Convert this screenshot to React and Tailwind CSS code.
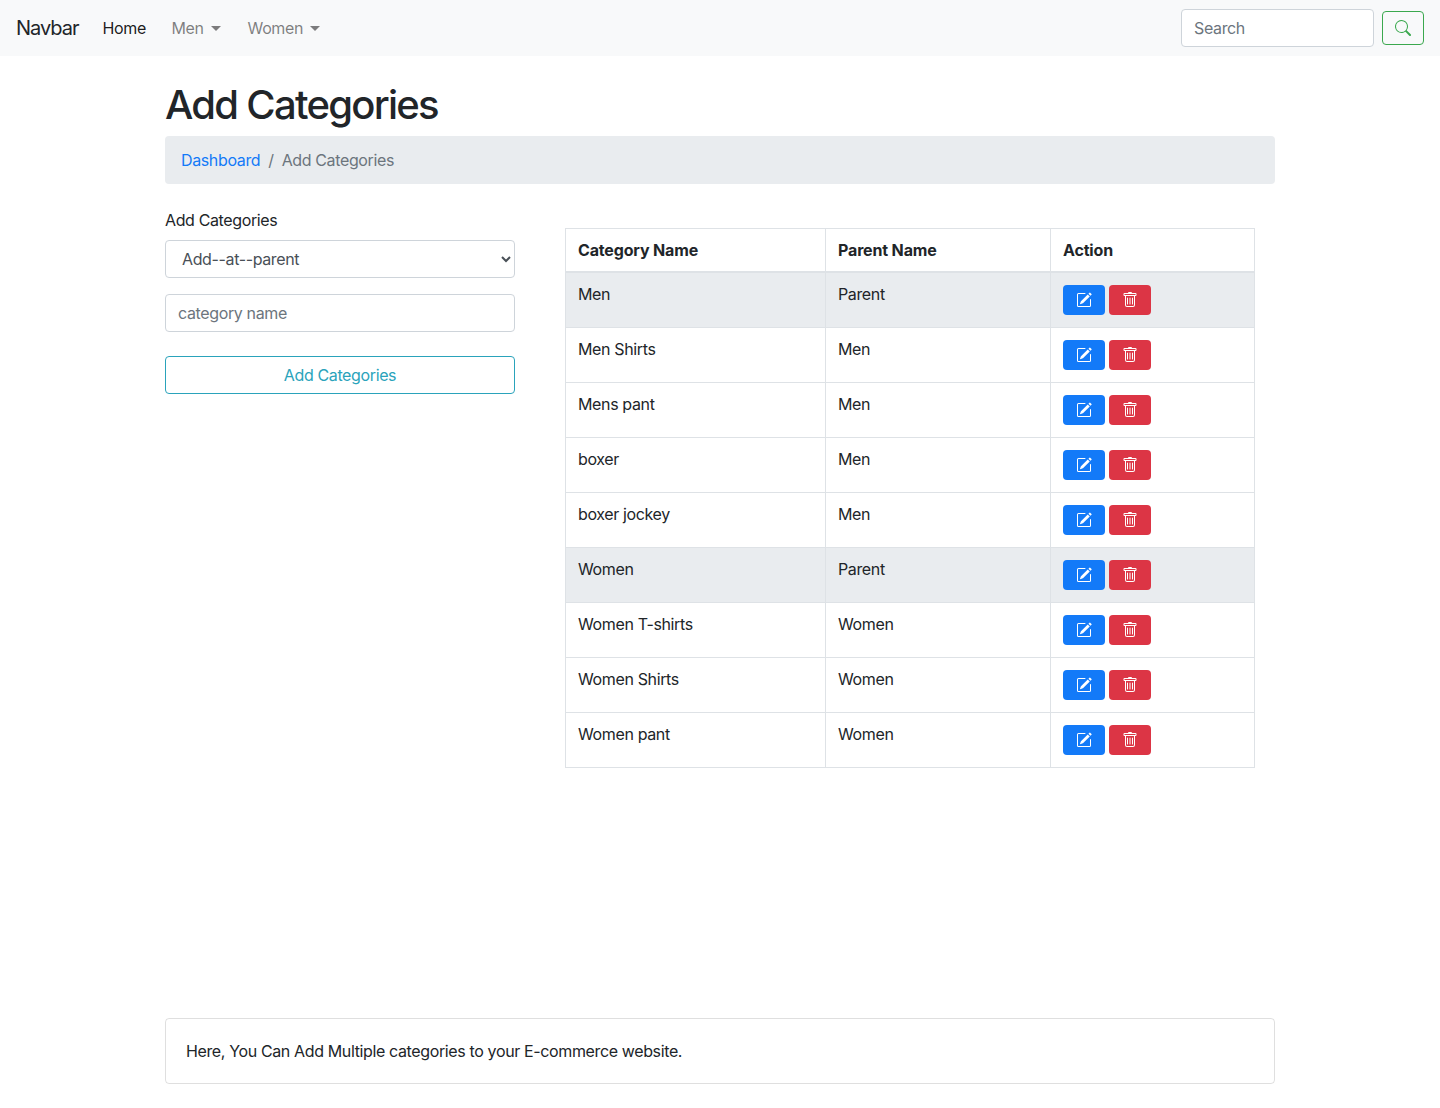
import React from 'react';

const rows = [
    { name: 'Men', parent: 'Parent', top: true },
    { name: 'Men Shirts', parent: 'Men' },
    { name: 'Mens pant', parent: 'Men' },
    { name: 'boxer', parent: 'Men' },
    { name: 'boxer jockey', parent: 'Men' },
    { name: 'Women', parent: 'Parent', top: true },
    { name: 'Women T-shirts', parent: 'Women' },
    { name: 'Women Shirts', parent: 'Women' },
    { name: 'Women pant', parent: 'Women' },
];

const PencilSquare = () => (
    <svg width="16" height="16" viewBox="0 0 16 16" fill="currentColor">
        <path d="M15.502 1.94a.5.5 0 0 1 0 .706L14.459 3.69l-2-2L13.502.646a.5.5 0 0 1 .707 0l1.293 1.293zm-1.75 2.456-2-2L4.939 9.21a.5.5 0 0 0-.121.196l-.805 2.414a.25.25 0 0 0 .316.316l2.414-.805a.5.5 0 0 0 .196-.12l6.813-6.814z" />
        <path fillRule="evenodd" d="M1 13.5A1.5 1.5 0 0 0 2.5 15h11a1.5 1.5 0 0 0 1.5-1.5v-6a.5.5 0 0 0-1 0v6a.5.5 0 0 1-.5.5h-11a.5.5 0 0 1-.5-.5v-11a.5.5 0 0 1 .5-.5H9a.5.5 0 0 0 0-1H2.5A1.5 1.5 0 0 0 1 2.5v11z" />
    </svg>
);

const Trash = () => (
    <svg width="16" height="16" viewBox="0 0 16 16" fill="currentColor">
        <path d="M5.5 5.5A.5.5 0 0 1 6 6v6a.5.5 0 0 1-1 0V6a.5.5 0 0 1 .5-.5zm2.5 0a.5.5 0 0 1 .5.5v6a.5.5 0 0 1-1 0V6a.5.5 0 0 1 .5-.5zm3 .5a.5.5 0 0 0-1 0v6a.5.5 0 0 0 1 0V6z" />
        <path fillRule="evenodd" d="M14.5 3a1 1 0 0 1-1 1H13v9a2 2 0 0 1-2 2H5a2 2 0 0 1-2-2V4h-.5a1 1 0 0 1-1-1V2a1 1 0 0 1 1-1H6a1 1 0 0 1 1-1h2a1 1 0 0 1 1 1h3.5a1 1 0 0 1 1 1v1zM4.118 4 4 4.059V13a1 1 0 0 0 1 1h6a1 1 0 0 0 1-1V4.059L11.882 4H4.118zM2.5 3V2h11v1h-11z" />
    </svg>
);

const Search = () => (
    <svg width="16" height="16" viewBox="0 0 16 16" fill="currentColor">
        <path d="M11.742 10.344a6.5 6.5 0 1 0-1.397 1.398h-.001c.03.04.062.078.098.115l3.85 3.85a1 1 0 0 0 1.415-1.414l-3.85-3.85a1.007 1.007 0 0 0-.115-.1zM12 6.5a5.5 5.5 0 1 1-11 0 5.5 5.5 0 0 1 11 0z" />
    </svg>
);

const Caret = () => (
    <span className="ml-[7px] inline-block align-[3px] border-x-[5px] border-t-[5px] border-x-transparent border-t-current"></span>
);

const App = () => {
    return (
        <div className="min-h-[1108px] flex flex-col bg-white text-[16px] leading-6 tracking-[-0.023em] text-[#212529] font-['Inter','Liberation_Sans',sans-serif]">
            {/* Navbar */}
            <nav className="h-14 shrink-0 flex items-center justify-between px-4 bg-[#f8f9fa]">
                <div className="flex items-center">
                    <a className="text-[20px] leading-[30px] tracking-[-0.05em] mr-4">Navbar</a>
                    <a className="px-2 text-black/90">Home</a>
                    <a className="px-2 ml-[9.5px] text-black/50">Men<Caret /></a>
                    <a className="px-2 ml-[11px] text-black/50">Women<Caret /></a>
                </div>
                <div className="flex items-center gap-2">
                    <input
                        placeholder="Search"
                        className="w-[193px] h-[38px] px-3 bg-white border border-[#ced4da] rounded placeholder:text-[#6c757d] outline-none"
                    />
                    <button className="w-[42px] h-[34px] flex items-center justify-center border border-[#3aa84e] rounded text-[#3aa84e]">
                        <Search />
                    </button>
                </div>
            </nav>

            <main className="w-[1110px] mx-auto flex-1 flex flex-col">
                <h1 className="mt-[25px] mb-[7px] text-[40px] leading-[48px] font-medium tracking-[-0.043em]">Add Categories</h1>

                {/* Breadcrumb */}
                <div className="h-12 flex items-center px-4 rounded bg-[#e9ecef]">
                    <a className="text-[#137af8]">Dashboard</a>
                    <span className="px-2 text-[#6c757d]">/</span>
                    <span className="text-[#6c757d]">Add Categories</span>
                </div>

                <div className="flex mt-6">
                    {/* Form */}
                    <div className="w-[350px] shrink-0">
                        <label className="block mb-2">Add Categories</label>
                        <select className="w-full h-[38px] pl-3 pr-1 bg-white border border-[#ced4da] rounded text-[#495057] outline-none">
                            <option>Add--at--parent</option>
                        </select>
                        <input
                            placeholder="category name"
                            className="block w-full h-[38px] mt-4 px-3 bg-white border border-[#ced4da] rounded placeholder:text-[#6c757d] outline-none"
                        />
                        <button className="block w-full h-[38px] mt-6 border border-[#2aa3bb] rounded text-[#2aa3bb]">
                            Add Categories
                        </button>
                    </div>

                    {/* Categories table */}
                    <div className="ml-[50px] mt-5">
                        <table className="w-[690px] table-fixed border-collapse border border-[#dee2e6]">
                            <thead>
                                <tr className="h-[43px] border-b-2 border-[#dee2e6]">
                                    <th className="w-[260px] px-3 py-0 text-left font-bold tracking-[-0.01em] border border-[#dee2e6] border-b-2">Category Name</th>
                                    <th className="w-[225px] px-3 py-0 text-left font-bold tracking-[-0.01em] border border-[#dee2e6] border-b-2">Parent Name</th>
                                    <th className="px-3 py-0 text-left font-bold tracking-[-0.01em] border border-[#dee2e6] border-b-2">Action</th>
                                </tr>
                            </thead>
                            <tbody>
                                {rows.map((row) => (
                                    <tr key={row.name} className={`h-[55px] ${row.top ? 'bg-[#e9ecef]' : ''}`}>
                                        <td className="px-3 py-[9px] align-top border border-[#dee2e6]">{row.name}</td>
                                        <td className="px-3 py-[9px] align-top border border-[#dee2e6]">{row.parent}</td>
                                        <td className="px-3 py-3 align-top border border-[#dee2e6]">
                                            <div className="flex gap-1">
                                                <button className="w-[42px] h-[30px] flex items-center justify-center rounded bg-[#137af8] text-white"><PencilSquare /></button>
                                                <button className="w-[42px] h-[30px] flex items-center justify-center rounded bg-[#dc3545] text-white"><Trash /></button>
                                            </div>
                                        </td>
                                    </tr>
                                ))}
                            </tbody>
                        </table>
                    </div>
                </div>

                {/* Footer note */}
                <div className="mt-auto mb-6 h-[66px] flex items-center px-5 border border-black/[0.125] rounded">
                    Here, You Can Add Multiple categories to your E-commerce website.
                </div>
            </main>
        </div>
    );
};

export default App;
